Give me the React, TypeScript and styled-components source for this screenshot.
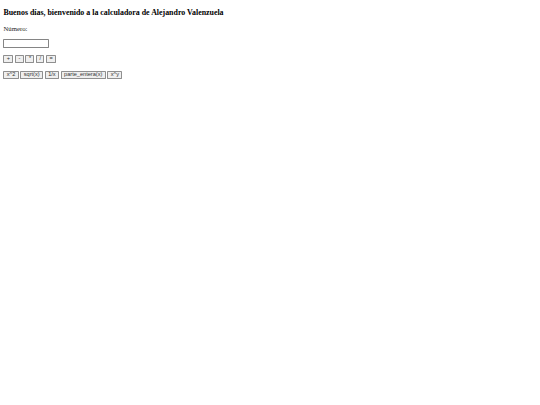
import React, { useState } from 'react';
import styled, { createGlobalStyle } from 'styled-components';

// the reference is a 1280px page shown at 540px, so every default size is scaled by 0.42
const GlobalStyle = createGlobalStyle`
	html, body {
		background: #ffffff;
	}
	body {
		margin: 3.4px;
		font-family: 'Liberation Serif', 'Times New Roman', serif;
		font-size: 6.75px;
		color: #000000;
	}
`;

const Title = styled.h3`
	font-family: 'Liberation Serif', 'Times New Roman', serif;
	font-size: 7.9px;
	font-weight: bold;
	margin: 4.9px 0 7.9px;
`;

const Row = styled.p`
	margin: 6.75px 0;
	line-height: normal;
	color: #222222;
`;

const Field = styled.div`
	margin: 6.75px 0;
	height: 8.9px;
	display: flex;
	align-items: center;
	gap: 1.7px;
`;

const NumberInput = styled.input`
	box-sizing: border-box;
	width: 46px;
	height: 8.9px;
	margin: 0;
	padding: 0 1px;
	border: 0.85px solid #858585;
	border-radius: 0.85px;
	font-family: 'Liberation Sans', Arial, sans-serif;
	font-size: 5.6px;
	outline: none;
`;

const OpButton = styled.button`
	box-sizing: border-box;
	height: 8.2px;
	padding: 0 2.4px;
	margin: 0;
	border: 0.85px solid #8f8f8f;
	border-radius: 0.85px;
	background: #efefef;
	color: #333333;
	font-family: 'Liberation Sans', Arial, sans-serif;
	font-size: 5.6px;
	line-height: 1;
	cursor: pointer;
`;

const basicOps = ['+', '-', '*', '/', '='];
const advancedOps = ['x^2', 'sqrt(x)', '1/x', 'parte_entera(x)', 'x^y'];

const App: React.FC = () => {
	const [value, setValue] = useState('');

	return (
		<>
			<GlobalStyle />
			<Title>Buenos días, bienvenido a la calculadora de Alejandro Valenzuela</Title>
			<Row>Número:</Row>
			<Field>
				<NumberInput type="text" value={value} onChange={(e) => setValue(e.target.value)} />
			</Field>
			<Field>
				{basicOps.map((op) => (
					<OpButton key={op}>{op}</OpButton>
				))}
			</Field>
			<Field>
				{advancedOps.map((op) => (
					<OpButton key={op}>{op}</OpButton>
				))}
			</Field>
		</>
	);
};

export default App;
